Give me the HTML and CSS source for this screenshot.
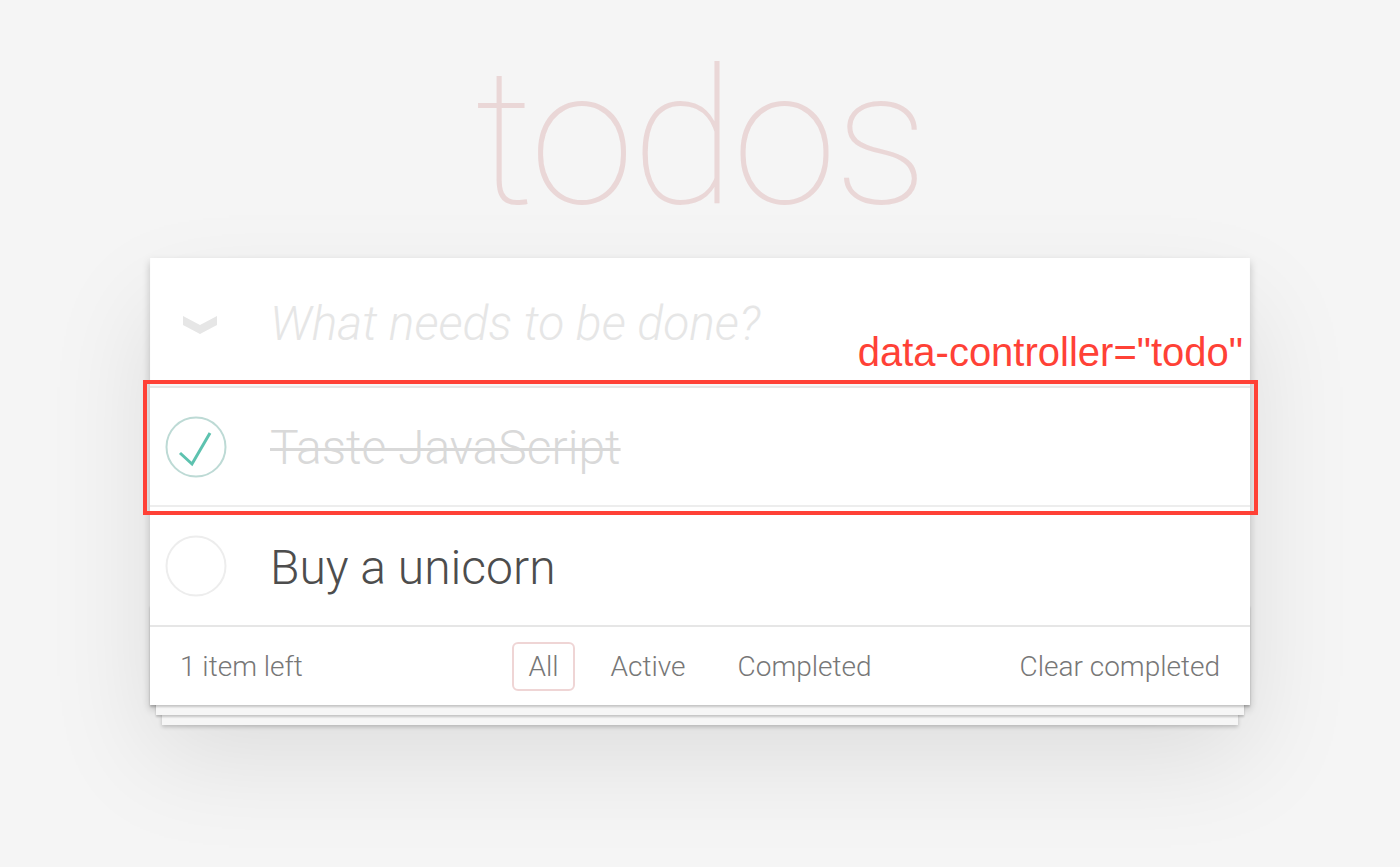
FILE: index.html
```html
<!DOCTYPE html>
<html lang="en">
<head>
<meta charset="utf-8">
<title>todos</title>
<link rel="stylesheet" href="styles.css">
</head>
<body>
<div class="page">
  <h1 class="title">todos</h1>
  <section class="todoapp">
    <header class="header">
      <div class="toggle-all">
        <svg width="34" height="20" viewBox="0 0 34 20"><polygon points="0,1 17,10 34,1 34,10 17,19 0,10" fill="#e6e6e6"/></svg>
      </div>
      <div class="new-todo">What needs to be done?</div>
    </header>
    <section class="main">
      <ul class="todo-list">
        <li class="todo completed">
          <div class="toggle-col">
            <svg class="toggle" width="62" height="62" viewBox="0 0 62 62"><circle cx="31" cy="31" r="29.5" fill="none" stroke="#bddad5" stroke-width="2"/><polyline points="15,37 27,48 45,17" fill="none" stroke="#5dc2af" stroke-width="3"/></svg>
          </div>
          <label class="label">Taste JavaScript</label>
        </li>
        <li class="todo">
          <div class="toggle-col">
            <svg class="toggle" width="62" height="62" viewBox="0 0 62 62"><circle cx="31" cy="31" r="29.5" fill="none" stroke="#ededed" stroke-width="2"/></svg>
          </div>
          <label class="label">Buy a unicorn</label>
        </li>
      </ul>
    </section>
    <footer class="footer">
      <span class="todo-count">1 item left</span>
      <ul class="filters">
        <li><a class="selected">All</a></li>
        <li><a>Active</a></li>
        <li><a>Completed</a></li>
      </ul>
      <span class="clear-completed">Clear completed</span>
    </footer>
  </section>
  <div class="annotation-box"></div>
  <div class="annotation-label">data-controller="todo"</div>
</div>
</body>
</html>
```
FILE: styles.css
```css
html, body {
  margin: 0;
  padding: 0;
}
body {
  background: #f5f5f5;
  font-family: "Helvetica Neue", Roboto, "Liberation Sans", Arial, sans-serif;
  font-weight: 300;
  color: #4d4d4d;
  height: 867px;
  overflow: hidden;
}
.page {
  width: 1100px;
  margin: 0 auto;
  position: relative;
}
.title {
  margin: 0;
  height: 258px;
  box-sizing: border-box;
  padding-top: 38px;
  font-size: 190px;
  line-height: 200px;
  font-weight: 100;
  text-align: center;
  color: rgba(175, 47, 47, 0.15);
  letter-spacing: -3px;
}
.todoapp {
  position: relative;
  background: #fff;
  box-shadow: 0 4px 8px 0 rgba(0, 0, 0, 0.2), 0 50px 100px 0 rgba(0, 0, 0, 0.1);
}
.header {
  height: 128px;
  display: flex;
  align-items: center;
  box-shadow: inset 0 -4px 2px rgba(0, 0, 0, 0.03);
}
.toggle-all {
  width: 120px;
  flex: none;
  box-sizing: border-box;
  padding-left: 33px;
  padding-top: 6px;
  display: flex;
}
.new-todo {
  font-size: 48px;
  font-style: italic;
  font-weight: 300;
  color: #e6e6e6;
  line-height: 1.4;
  padding-top: 3px;
}
.main {
  border-top: 2px solid #e6e6e6;
}
.todo-list {
  list-style: none;
  margin: 0;
  padding: 0;
}
.todo {
  height: 117px;
  display: flex;
  align-items: center;
  border-bottom: 2px solid #ededed;
}
.todo:last-child {
  border-bottom: none;
  height: 118px;
}
.toggle-col {
  width: 120px;
  flex: none;
  box-sizing: border-box;
  padding-left: 15px;
  display: flex;
}
.label {
  font-size: 48px;
  line-height: 1.2;
  color: #4d4d4d;
  padding-top: 3px;
}
.completed .label {
  color: #d9d9d9;
  text-decoration: line-through;
  text-decoration-thickness: 3px;
}
.footer {
  position: relative;
  height: 80px;
  box-sizing: border-box;
  border-top: 2px solid #e6e6e6;
  padding: 0 30px;
  display: grid;
  grid-template-columns: 1fr auto 1fr;
  align-items: center;
  font-size: 28px;
  color: #777;
}
.footer::before {
  content: "";
  position: absolute;
  left: 0;
  right: 0;
  bottom: 0;
  height: 100px;
  box-shadow: 0 2px 2px rgba(0, 0, 0, 0.2),
    0 16px 0 -6px #f6f6f6,
    0 18px 2px -6px rgba(0, 0, 0, 0.2),
    0 32px 0 -12px #f6f6f6,
    0 34px 4px -12px rgba(0, 0, 0, 0.2);
}
.todo-count {
  position: relative;
  justify-self: start;
}
.filters {
  position: relative;
  list-style: none;
  margin: 0;
  padding: 0;
  display: flex;
  gap: 20px;
}
.filters a {
  display: block;
  padding: 6px 14px;
  border: 2px solid transparent;
  border-radius: 6px;
  color: #777;
}
.filters a.selected {
  border-color: rgba(175, 47, 47, 0.2);
}
.clear-completed {
  position: relative;
  justify-self: end;
}
.annotation-box {
  position: absolute;
  left: -7px;
  top: 380px;
  width: 1115px;
  height: 135px;
  box-sizing: border-box;
  border: 4px solid #ff4136;
}
.annotation-label {
  position: absolute;
  right: 7px;
  top: 328px;
  font-family: "Liberation Sans", Arial, sans-serif;
  font-weight: 400;
  font-size: 40px;
  line-height: 48px;
  color: #ff4136;
}
```
